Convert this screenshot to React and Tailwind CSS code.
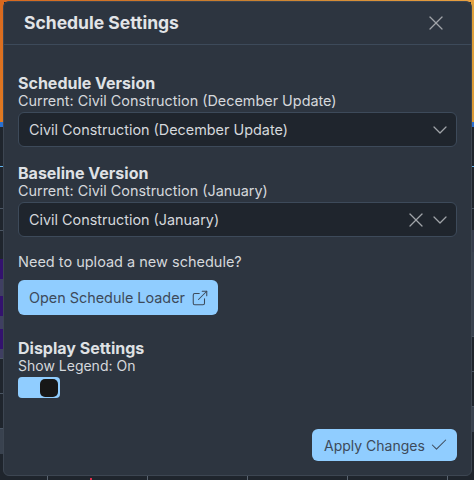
import { X, ChevronDown, ExternalLink, Check } from 'lucide-react';

// rows of the page that shows beside the modal
const leftBands = [
  ['h-[120px]', 'bg-gradient-to-b from-[#d9691f] to-[#e07a22]'],
  ['h-[5px]', 'bg-[#2a6fd0]'],
  ['h-[39px]', 'bg-[#1f252d]'],
  ['h-[1px]', 'bg-[#63b3ed]'],
  ['h-[41px]', 'bg-[#1f252d]'],
  ['h-[1px]', 'bg-[#4a5563]'],
  ['h-[21px]', 'bg-[#1f252d]'],
  ['h-[1px]', 'bg-[#4a5563]'],
  ['h-[28px]', 'bg-[#1f252d]'],
  ['h-[20px]', 'bg-[#33126e]'],
  ['h-[17px]', 'bg-[#3f3f62]'],
  ['h-[20px]', 'bg-[#33126e]'],
  ['h-[13px]', 'bg-[#3f3f62]'],
  ['h-[20px]', 'bg-[#33126e]'],
  ['h-[9px]', 'bg-[#3f3f62]'],
  ['h-[1px]', 'bg-[#4a5563]'],
  ['h-[34px]', 'bg-[#1f252d]'],
  ['h-[1px]', 'bg-[#4a5563]'],
  ['h-[34px]', 'bg-[#1f252d]'],
  ['h-[1px]', 'bg-[#4a5563]'],
  ['h-[25px]', 'bg-[#39424f]'],
  ['h-[28px]', 'bg-[#1f252d]'],
];

const rightBands = [
  ['h-[120px]', 'bg-gradient-to-b from-[#e0a23c] to-[#dc9a35]'],
  ['h-[5px]', 'bg-[#2a6fd0]'],
  ['h-[39px]', 'bg-[#1f252d]'],
  ['h-[1px]', 'bg-[#63b3ed]'],
  ['h-[41px]', 'bg-[#1f252d]'],
  ['h-[1px]', 'bg-[#4a5563]'],
  ['h-[21px]', 'bg-[#1f252d]'],
  ['h-[22px]', 'bg-[#363c4c]'],
  ['h-[84px]', 'bg-[#39424f]'],
  ['h-[1px]', 'bg-[#4a5563]'],
  ['h-[34px]', 'bg-[#1f252d]'],
  ['h-[1px]', 'bg-[#4a5563]'],
  ['h-[34px]', 'bg-[#1f252d]'],
  ['h-[1px]', 'bg-[#4a5563]'],
  ['h-[25px]', 'bg-[#39424f]'],
  ['h-[28px]', 'bg-[#1f252d]'],
];

const ticks = ['w-[48px]', 'w-[100px]', 'w-[100px]', 'w-[100px]', 'w-[100px]'];

const SelectBox = ({ value, clearable }) => (
  <div className="h-[35px] flex items-center justify-between pl-[10px] pr-[4px] bg-[#1f252d] border border-[#3d4a5a] rounded-md text-[14.4px] text-[#d5d8dc]">
    <span>{value}</span>
    <div className="flex items-center text-[#a0a4a8]">
      {clearable && <X size={24} strokeWidth={1.25} />}
      <ChevronDown size={24} strokeWidth={1.25} />
    </div>
  </div>
);

const App = () => {
  return (
    <div className="relative w-[474px] h-[480px] overflow-hidden bg-[#1f252d] font-['Inter','Noto_Sans',sans-serif]">
      {/* page behind the modal */}
      <div className="h-[2px] bg-gradient-to-r from-[#d9691f] via-[#c9802f] to-[#e8a040]" />
      <div className="flex justify-between">
        <div className="w-[4px]">
          {leftBands.map(([h, bg], i) => <div key={i} className={`${h} ${bg}`} />)}
        </div>
        <div className="w-[3px]">
          {rightBands.map(([h, bg], i) => <div key={i} className={`${h} ${bg}`} />)}
        </div>
      </div>
      <div className="absolute left-0 bottom-0 flex h-[4px]">
        {ticks.map((w, i) => (
          <div key={i} className={`${w} h-full border-r border-[#5a6470]`} />
        ))}
      </div>
      <div className="absolute left-[90px] bottom-0 w-[2px] h-[2px] bg-[#e02d4a]" />

      <div className="absolute left-[3px] top-[1px] w-[469px] h-[475px] flex flex-col bg-[#2d3540] border border-[#3d4652] rounded-md">
        <div className="h-[43px] shrink-0 flex items-center justify-between pl-[20px] pr-[23px] border-b border-[#3d4a5a]">
          <h2 className="text-[17.5px] font-bold text-[#e2e4e7]">Schedule Settings</h2>
          <X size={24} strokeWidth={1.25} className="text-[#a0a4a8]" />
        </div>

        <div className="flex-1 flex flex-col px-[14px] pt-[29px] text-[#d5d8dc]">
          <div className="text-[16px] leading-[18px] font-bold text-[#dfe1e4]">Schedule Version</div>
          <div className="text-[14.4px] leading-[17px] mb-[3px]">Current: Civil Construction (December Update)</div>
          <SelectBox value="Civil Construction (December Update)" />

          <div className="mt-[17px] text-[16px] leading-[18px] font-bold text-[#dfe1e4]">Baseline Version</div>
          <div className="text-[14.4px] leading-[17px] mb-[3px]">Current: Civil Construction (January)</div>
          <SelectBox value="Civil Construction (January)" clearable />

          <div className="mt-[16px] text-[14.5px] leading-[17px]">Need to upload a new schedule?</div>
          <button className="mt-[10px] w-[200px] h-[35px] flex items-center gap-[6px] pl-[11px] bg-[#90cdff] rounded-md text-[14.4px] text-[#3d4a5a]">
            Open Schedule Loader
            <ExternalLink size={18} strokeWidth={1.4} />
          </button>

          <div className="mt-[24px] text-[16px] leading-[18px] font-bold text-[#dfe1e4]">Display Settings</div>
          <div className="text-[14px] leading-[17px]">Show Legend: On</div>
          <div className="mt-[3px] w-[42px] h-[21px] flex justify-end items-center p-[2px] bg-[#90cdff] rounded-[4px]">
            <div className="w-[18px] h-[18px] bg-[#171717] rounded-[5px]" />
          </div>

          <div className="mt-auto mb-[14px] flex justify-end">
            <button className="w-[145px] h-[32px] flex items-center gap-[4px] pl-[12px] bg-[#90cdff] rounded-md text-[14px] text-[#3d4a5a]">
              Apply Changes
              <Check size={20} strokeWidth={1.25} />
            </button>
          </div>
        </div>
      </div>
    </div>
  );
};

export default App;
